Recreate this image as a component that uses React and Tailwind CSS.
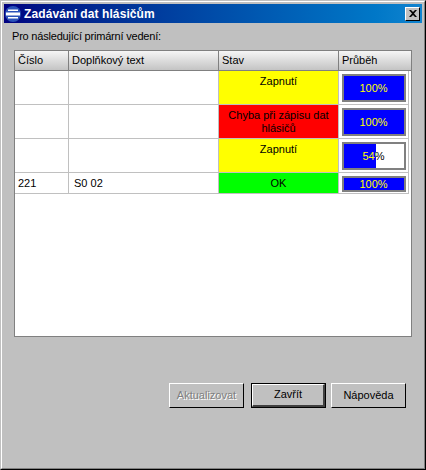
const rows = [
  { num: "", text: "", stav: "Zapnutí", color: "bg-[#ffff00]", pct: 100, h: "h-[34px]", barH: "h-[28px]" },
  { num: "", text: "", stav: "Chyba při zápisu dat hlásičů", color: "bg-[#ff0000]", pct: 100, h: "h-[34px]", barH: "h-[28px]" },
  { num: "", text: "", stav: "Zapnutí", color: "bg-[#ffff00]", pct: 54, h: "h-[34px]", barH: "h-[28px]" },
  { num: "221", text: "S0 02", stav: "OK", color: "bg-[#00ff00]", pct: 100, h: "h-[21px]", barH: "h-[16px]" },
];

function Progress({ pct, barH }) {
  return (
    <div className={`relative w-[64px] ${barH} border-2 border-[#808080] bg-white text-black`}>
      <div className="absolute inset-0 flex items-center justify-center">{pct}%</div>
      <div className="absolute inset-y-0 left-0 overflow-hidden bg-[#0000ff] text-[#ffff00]" style={{ width: `${pct}%` }}>
        <div className="flex h-full w-[60px] items-center justify-center">{pct}%</div>
      </div>
    </div>
  );
}

function Header({ className, children }) {
  return (
    <div className={`flex h-[19px] items-center border-r border-[#808080] pl-[3px] ${className}`}>
      {children}
    </div>
  );
}

function Btn({ children, disabled, active, className }) {
  if (active) {
    return (
      <div className={`h-[25px] border border-black ${className}`}>
        <div className="flex h-full items-center justify-center border-t border-l border-white border-r-2 border-b-2 border-r-[#404040] border-b-[#404040] bg-[#c0c0c0] pb-px">
          {children}
        </div>
      </div>
    );
  }
  return (
    <div className={`flex h-[25px] items-center justify-center border border-t-white border-l-white border-r-black border-b-black bg-[#c0c0c0] pb-px ${className} ${disabled ? "text-[#808080] [text-shadow:1px_1px_0_#ffffff]" : ""}`}>
      {children}
    </div>
  );
}

export default function App() {
  return (
    <div className="h-[470px] w-[426px] border border-t-[#c0c0c0] border-l-[#c0c0c0] border-r-black border-b-black font-['Liberation_Sans',sans-serif] text-[11px] text-black">
      <div className="flex h-full flex-col border border-t-white border-l-white border-r-[#808080] border-b-[#808080] bg-[#c0c0c0] p-[2px]">
        <div className="flex h-[19px] items-center bg-gradient-to-r from-[#000080] to-[#1084d0] pr-[2px] pl-px">
          <svg width="16" height="16" viewBox="0 0 16 16">
            <circle cx="8" cy="8" r="8" fill="#2a52b8" />
            <path d="M3 3.5h10V5H3zM1 6.5h14v3H1zM3 11h10v1.5H3z" fill="#ffffff" />
          </svg>
          <span className="ml-[3px] text-[12px] font-bold tracking-[0.1px] text-white">Zadávání dat hlásičům</span>
          <div className="ml-auto flex h-[14px] w-[15px] items-center justify-center border border-t-white border-l-white border-r-black border-b-black bg-[#c0c0c0]">
            <svg width="8" height="7" viewBox="0 0 8 7">
              <path d="M0 0h2l2 2 2-2h2L5 3.5 8 7H6L4 5 2 7H0l3-3.5z" fill="#000000" />
            </svg>
          </div>
        </div>

        <div className="pt-[6px] pb-[7px] pl-[8px] leading-[14px] tracking-[-0.2px]">Pro následující primární vedení:</div>

        <div className="ml-[10px] h-[287px] w-[398px] border border-[#808080] bg-white">
          <div className="flex w-[396px] border-b border-[#808080] bg-gradient-to-b from-[#f6f6f6] to-[#c4c4c4]">
            <Header className="w-[54px]">Číslo</Header>
            <Header className="w-[150px]">Doplňkový text</Header>
            <Header className="w-[120px]">Stav</Header>
            <Header className="w-[70px] border-r-0">Průběh</Header>
          </div>
          {rows.map((r, i) => (
            <div key={i} className={`flex w-[394px] border-b border-[#c0c0c0] ${r.h}`}>
              <div className="w-[54px] border-r border-[#c0c0c0] pt-[2px] pl-[3px]">{r.num}</div>
              <div className="w-[150px] border-r border-[#c0c0c0] pt-[2px] pl-[5px]">{r.text}</div>
              <div className={`w-[120px] border-r border-[#c0c0c0] text-center leading-[13px] ${r.color} pt-[4px]`}>
                <div className="mx-auto w-[115px]">{r.stav}</div>
              </div>
              <div className="flex w-[70px] items-start justify-center border-r border-[#c0c0c0] pt-[3px]">
                <Progress pct={r.pct} barH={r.barH} />
              </div>
            </div>
          ))}
        </div>

        <div className="mt-[46px] flex pl-[165px]">
          <Btn disabled className="w-[75px]">Aktualizovat</Btn>
          <Btn active className="ml-[7px] w-[75px]">Zavřít</Btn>
          <Btn className="ml-[5px] w-[75px]">Nápověda</Btn>
        </div>
      </div>
    </div>
  );
}
